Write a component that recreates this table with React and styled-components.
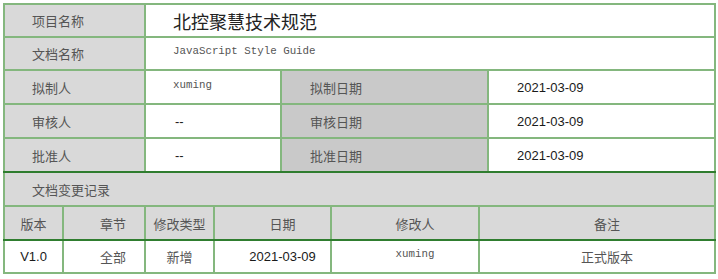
import React from "react";
import styled, { createGlobalStyle } from "styled-components";

const Global = createGlobalStyle`
  html, body { margin: 0; padding: 0; background: #fff; }
  body { font-family: "Liberation Sans", "Noto Sans CJK SC", sans-serif; }
`;

const Page = styled.div`
  padding: 3px 0 0 3px;
`;

const Table = styled.table`
  border-collapse: collapse;
  table-layout: fixed;
  width: 711px;
  border-top: 2px solid #2f7d2f;
  border-left: 2px solid #5f9f5a;
  border-right: 2px solid #6aa865;
  border-bottom: 2px solid #6aa865;
`;

const Row = styled.tr`
  height: ${(p) => p.$h}px;
`;

const Cell = styled.td`
  border: 2px solid #84b77e;
  ${(p) => p.$darkBottom && "border-bottom: 2px solid #2f7d2f;"}
  padding: 0 0 ${(p) => (p.$mono ? 5 : 0)}px ${(p) => p.$pl ?? 27}px;
  text-align: ${(p) => (p.$center ? "center" : "left")};
  vertical-align: middle;
  background: ${(p) =>
    p.$tone === "label" ? "#d9d9d9" : p.$tone === "dark" ? "#c9c9c9" : "#fff"};
  color: ${(p) => (p.$mono ? "#555" : p.$tone ? "#555" : "#1a1a1a")};
  font-family: ${(p) =>
    p.$mono
      ? `"Liberation Mono", "Courier New", monospace`
      : `"Liberation Sans", Arial, "Noto Sans CJK SC", sans-serif`};
  font-size: ${(p) => (p.$mono ? "10.8px" : "13px")};
  white-space: nowrap;
  overflow: hidden;
`;

const Label = styled.span`
  font-family: "Noto Sans CJK SC", sans-serif;
  font-size: ${(p) => (p.$title ? 18 : 13)}px;
  color: ${(p) => (p.$title ? "#222" : "#555")};
`;

const colWidths = [59, 82, 69, 67, 50, 148, 9, 227];

const topRows = [
  ["拟制人", "xuming", "拟制日期", "2021-03-09", true],
  ["审核人", "--", "审核日期", "2021-03-09", false],
  ["批准人", "--", "批准日期", "2021-03-09", false],
];

export default function App() {
  return (
    <Page>
      <Global />
      <Table>
        <colgroup>
          {colWidths.map((w, i) => (
            <col key={i} style={{ width: w }} />
          ))}
        </colgroup>
        <tbody>
          <Row $h={33}>
            <Cell colSpan={2} $tone="label">
              <Label>项目名称</Label>
            </Cell>
            <Cell colSpan={6}>
              <Label $title>北控聚慧技术规范</Label>
            </Cell>
          </Row>
          <Row $h={33}>
            <Cell colSpan={2} $tone="label">
              <Label>文档名称</Label>
            </Cell>
            <Cell colSpan={6} $mono>
              JavaScript Style Guide
            </Cell>
          </Row>
          {topRows.map(([a, b, c, d, mono], i) => (
            <Row key={a} $h={34}>
              <Cell colSpan={2} $tone="label" $darkBottom={i === 2}>
                <Label>{a}</Label>
              </Cell>
              <Cell colSpan={2} $mono={mono} $pl={mono ? 27 : 29} $darkBottom={i === 2}>
                {b}
              </Cell>
              <Cell colSpan={3} $tone="dark" $pl={28} $darkBottom={i === 2}>
                <Label>{c}</Label>
              </Cell>
              <Cell $pl={28} $darkBottom={i === 2}>{d}</Cell>
            </Row>
          ))}
          <Row $h={34}>
            <Cell colSpan={8} $tone="label">
              <Label>文档变更记录</Label>
            </Cell>
          </Row>
          <Row $h={34}>
            <Cell $tone="label" $center $pl={0} $darkBottom>
              <Label>版本</Label>
            </Cell>
            <Cell $tone="label" $center $pl={18} $darkBottom>
              <Label>章节</Label>
            </Cell>
            <Cell $tone="label" $center $pl={0} $darkBottom>
              <Label>修改类型</Label>
            </Cell>
            <Cell colSpan={2} $tone="label" $center $pl={20} $darkBottom>
              <Label>日期</Label>
            </Cell>
            <Cell $tone="label" $center $pl={20} $darkBottom>
              <Label>修改人</Label>
            </Cell>
            <Cell colSpan={2} $tone="label" $center $pl={20} $darkBottom>
              <Label>备注</Label>
            </Cell>
          </Row>
          <Row $h={33}>
            <Cell $center $pl={0}>V1.0</Cell>
            <Cell $center $pl={18}>
              <Label>全部</Label>
            </Cell>
            <Cell $center $pl={0}>
              <Label>新增</Label>
            </Cell>
            <Cell colSpan={2} $center $pl={20}>2021-03-09</Cell>
            <Cell $center $pl={20} $mono>xuming</Cell>
            <Cell colSpan={2} $center $pl={20}>
              <Label>正式版本</Label>
            </Cell>
          </Row>
        </tbody>
      </Table>
    </Page>
  );
}
